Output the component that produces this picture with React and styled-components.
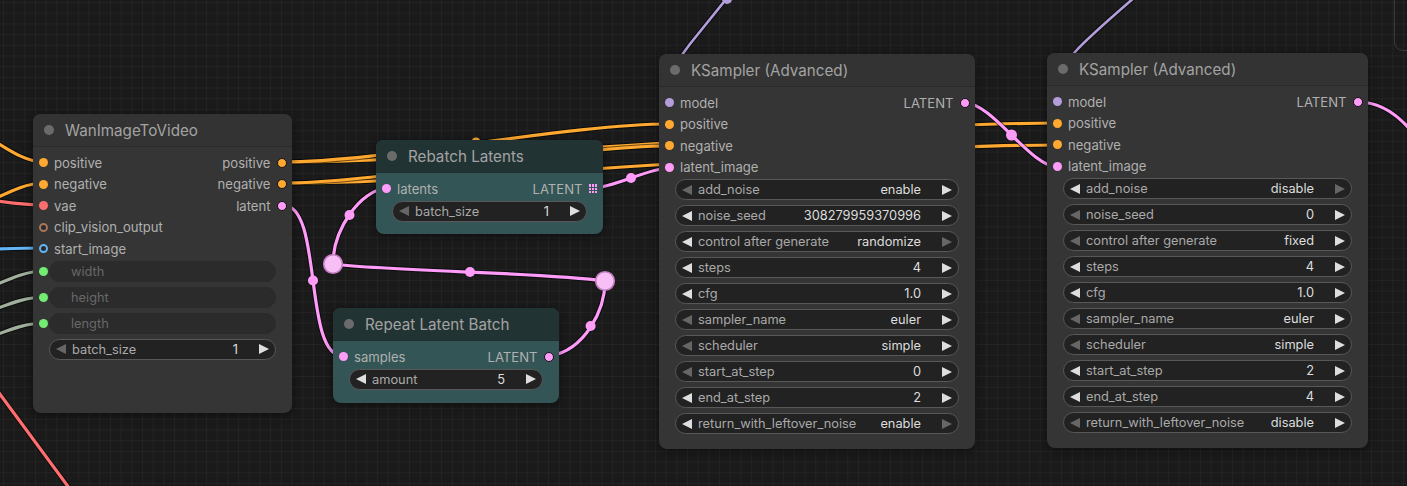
import React from 'react';
import styled, { createGlobalStyle } from 'styled-components';

const C = {
  orange: '#ffa931',
  pink: '#ff9cf9',
  lav: '#b39ddb',
  red: '#ff6e6e',
  blue: '#64b5f6',
  intWire: '#a0b09d',
  intDot: '#72ec72',
  clip: '#a8765a',
};

const GlobalStyle = createGlobalStyle`
  html, body { margin: 0; padding: 0; background: #1a1a1a; overflow: hidden; }
  body { font-family: Inter, "Noto Sans", sans-serif; }
`;

const Canvas = styled.div`
  position: relative;
  width: 1407px;
  height: 486px;
  overflow: hidden;
  background-color: #1a1a1a;
  background-image:
    linear-gradient(to right, rgba(255,255,255,0.035) 1px, transparent 1px),
    linear-gradient(to bottom, rgba(255,255,255,0.035) 1px, transparent 1px);
  background-size: 10.7px 10.7px;
  background-position: 3px 2px;
  font-family: Inter, "Noto Sans", sans-serif;
`;

const WireLayer = styled.svg`
  position: absolute;
  left: 0;
  top: 0;
  width: 1407px;
  height: 486px;
  overflow: visible;
`;

const CornerPanel = styled.div`
  position: absolute;
  left: 1394px;
  top: -12px;
  width: 40px;
  height: 63px;
  box-sizing: border-box;
  border: 1px solid #3a3a3a;
  border-radius: 9px;
`;

const NodeBox = styled.div`
  position: absolute;
  left: ${p => p.$x}px;
  top: ${p => p.$y}px;
  width: ${p => p.$w}px;
  ${p => (p.$h ? `height: ${p.$h}px;` : '')}
  background: ${p => (p.$teal ? '#335555' : '#353535')};
  border-radius: 8px;
  box-shadow: 0 2px 8px rgba(0, 0, 0, 0.45);
  overflow: hidden;
  display: flex;
  flex-direction: column;
`;

const Header = styled.div`
  height: 33px;
  flex: none;
  box-sizing: border-box;
  display: flex;
  align-items: center;
  gap: 11px;
  padding-left: 11px;
  background: ${p => (p.$teal ? '#223333' : '#333333')};
  border-bottom: 1px solid ${p => (p.$teal ? '#1e2e2e' : '#2a2a2a')};
`;

const TitleDot = styled.span`
  width: 10px;
  height: 10px;
  border-radius: 50%;
  background: #6b6b6b;
  flex: none;
`;

const Title = styled.span`
  font-size: 15.2px;
  color: #a3a3a3;
  white-space: nowrap;
`;

const Body = styled.div`
  display: flex;
  flex-direction: column;
  padding: 5px 0 ${p => p.$pb}px;
`;

const SlotRow = styled.div`
  height: 21.5px;
  display: flex;
  align-items: center;
  justify-content: space-between;
  padding: 0 5.5px;
`;

const SlotSide = styled.div`
  display: flex;
  align-items: center;
  gap: ${p => (p.$out ? 6 : 6.5)}px;
`;

const SlotLabel = styled.span`
  font-size: 13.1px;
  color: #b0b0b0;
  white-space: nowrap;
`;

const Dot = styled.span`
  width: ${p => (p.$out ? 10 : 9)}px;
  height: ${p => (p.$out ? 10 : 9)}px;
  border-radius: 50%;
  box-sizing: border-box;
  flex: none;
  background: ${p => (p.$hollow ? '#2b2b2b' : p.$c)};
  border: ${p => (p.$hollow ? `2px solid ${p.$c}` : p.$out ? '1px solid #141414' : 'none')};
`;

const GridIcon = styled.span`
  width: 9px;
  height: 9px;
  flex: none;
  display: grid;
  grid-template-columns: repeat(3, 2.4px);
  grid-template-rows: repeat(3, 2.4px);
  gap: 0.9px;
`;

const GridCell = styled.span`
  background: ${C.pink};
`;

const WidgetList = styled.div`
  display: flex;
  flex-direction: column;
  margin-top: -1.5px;
`;

const WidgetRow = styled.div`
  height: 26px;
  display: flex;
  align-items: center;
  gap: 1.5px;
  padding: 0 16px 0 ${p => (p.$dot ? 5.5 : 16)}px;
`;

const Pill = styled.div`
  flex: 1;
  height: 21px;
  box-sizing: border-box;
  border-radius: 11px;
  display: flex;
  align-items: center;
  padding: 0 6px 0 ${p => (p.$disabled ? 15 : 6)}px;
  background: ${p => (p.$disabled ? '#2b2b2b' : '#222222')};
  border: 1px solid ${p => (p.$disabled ? '#2b2b2b' : '#585858')};
`;

const Arrow = styled.span`
  width: 0;
  height: 0;
  flex: none;
  border-top: 5.5px solid transparent;
  border-bottom: 5.5px solid transparent;
  ${p =>
    p.$dir === 'l'
      ? `border-right: 10px solid ${p.$dim ? '#666666' : '#dedede'};`
      : `border-left: 10px solid ${p.$dim ? '#666666' : '#dedede'};`}
`;

const WLabel = styled.span`
  flex: 1;
  margin-left: 6px;
  font-size: 12.8px;
  color: ${p => (p.$disabled ? '#686868' : '#a9a9a9')};
  white-space: nowrap;
`;

const WValue = styled.span`
  margin-right: 21px;
  font-size: 12.8px;
  color: #dddddd;
  white-space: nowrap;
`;

function Slot({ s, out }) {
  if (!s) return <SlotSide />;
  const dot = s.grid ? (
    <GridIcon>
      {Array.from({ length: 9 }).map((_, i) => (
        <GridCell key={i} />
      ))}
    </GridIcon>
  ) : (
    <Dot $c={s.c} $hollow={s.hollow} $out={out} />
  );
  return out ? (
    <SlotSide $out>
      <SlotLabel>{s.l}</SlotLabel>
      {dot}
    </SlotSide>
  ) : (
    <SlotSide>
      {dot}
      <SlotLabel>{s.l}</SlotLabel>
    </SlotSide>
  );
}

function Widget({ w }) {
  if (w.dis) {
    return (
      <WidgetRow $dot>
        <Dot $c={C.intDot} />
        <Pill $disabled>
          <WLabel $disabled>{w.l}</WLabel>
        </Pill>
      </WidgetRow>
    );
  }
  return (
    <WidgetRow>
      <Pill>
        <Arrow $dir="l" $dim={w.ld} />
        <WLabel>{w.l}</WLabel>
        <WValue>{w.v}</WValue>
        <Arrow $dir="r" $dim={w.rd} />
      </Pill>
    </WidgetRow>
  );
}

function Node({ n }) {
  return (
    <NodeBox $x={n.x} $y={n.y} $w={n.w} $h={n.h} $teal={n.teal}>
      <Header $teal={n.teal}>
        <TitleDot />
        <Title>{n.title}</Title>
      </Header>
      <Body $pb={n.pb}>
        {n.slots.map((row, i) => (
          <SlotRow key={i}>
            <Slot s={row[0]} />
            <Slot s={row[1]} out />
          </SlotRow>
        ))}
        <WidgetList>
          {n.widgets.map((w, i) => (
            <Widget key={i} w={w} />
          ))}
        </WidgetList>
      </Body>
    </NodeBox>
  );
}

const ksSlots = [
  [{ l: 'model', c: C.lav }, { l: 'LATENT', c: C.pink }],
  [{ l: 'positive', c: C.orange }, null],
  [{ l: 'negative', c: C.orange }, null],
  [{ l: 'latent_image', c: C.pink }, null],
];

const nodes = [
  {
    title: 'WanImageToVideo',
    x: 33, y: 114, w: 259, h: 299, pb: 12,
    slots: [
      [{ l: 'positive', c: C.orange }, { l: 'positive', c: C.orange }],
      [{ l: 'negative', c: C.orange }, { l: 'negative', c: C.orange }],
      [{ l: 'vae', c: C.red }, { l: 'latent', c: C.pink }],
      [{ l: 'clip_vision_output', c: C.clip, hollow: true }, null],
      [{ l: 'start_image', c: C.blue, hollow: true }, null],
    ],
    widgets: [
      { l: 'width', dis: true },
      { l: 'height', dis: true },
      { l: 'length', dis: true },
      { l: 'batch_size', v: '1', ld: true },
    ],
  },
  {
    title: 'Rebatch Latents',
    teal: true,
    x: 376, y: 140, w: 227, pb: 10,
    slots: [[{ l: 'latents', c: C.pink }, { l: 'LATENT', grid: true }]],
    widgets: [{ l: 'batch_size', v: '1', ld: true }],
  },
  {
    title: 'Repeat Latent Batch',
    teal: true,
    x: 333, y: 308, w: 226, pb: 11,
    slots: [[{ l: 'samples', c: C.pink }, { l: 'LATENT', c: C.pink }]],
    widgets: [{ l: 'amount', v: '5' }],
  },
  {
    title: 'KSampler (Advanced)',
    x: 659, y: 54, w: 316, pb: 12,
    slots: ksSlots,
    widgets: [
      { l: 'add_noise', v: 'enable', ld: true },
      { l: 'noise_seed', v: '308279959370996' },
      { l: 'control after generate', v: 'randomize', rd: true },
      { l: 'steps', v: '4' },
      { l: 'cfg', v: '1.0' },
      { l: 'sampler_name', v: 'euler', ld: true },
      { l: 'scheduler', v: 'simple', ld: true },
      { l: 'start_at_step', v: '0', ld: true },
      { l: 'end_at_step', v: '2' },
      { l: 'return_with_leftover_noise', v: 'enable', rd: true },
    ],
  },
  {
    title: 'KSampler (Advanced)',
    x: 1047, y: 53, w: 321, pb: 12,
    slots: ksSlots,
    widgets: [
      { l: 'add_noise', v: 'disable', rd: true },
      { l: 'noise_seed', v: '0', ld: true },
      { l: 'control after generate', v: 'fixed', ld: true },
      { l: 'steps', v: '4' },
      { l: 'cfg', v: '1.0' },
      { l: 'sampler_name', v: 'euler', ld: true },
      { l: 'scheduler', v: 'simple', ld: true },
      { l: 'start_at_step', v: '2' },
      { l: 'end_at_step', v: '4' },
      { l: 'return_with_leftover_noise', v: 'disable', ld: true },
    ],
  },
];

const wires = [
  // left edge inputs
  { d: 'M-60,120 C-20,120 10,162 44,162', c: C.orange },
  { d: 'M-60,215 C-20,215 10,183 44,183', c: C.orange },
  { d: 'M-60,196 C-20,196 10,205 44,205', c: C.red },
  { d: 'M-60,250 C-20,250 10,248 44,248', c: C.blue },
  { d: 'M-60,300 C-20,300 10,271 44,271', c: C.intWire },
  { d: 'M-60,322 C-20,322 10,297 44,297', c: C.intWire },
  { d: 'M-60,348 C-20,348 10,323 44,323', c: C.intWire },
  { d: 'M-12,378 L78,500', c: C.red },
  // conditioning
  { d: 'M283,162 C477,162 864,123 1058,123', c: C.orange },
  { d: 'M283,183 C477,183 864,145 1058,145', c: C.orange },
  { d: 'M283,162 C380,162 572,124 669,124', c: C.orange },
  { d: 'M283,183 C380,183 572,146 669,146', c: C.orange },
  // model
  { d: 'M748,-28 L690,44 C672,68 652,98 669,103', c: C.lav, w: 2.6 },
  { d: 'M1157,-22 C1120,10 1090,35 1075,52 C1062,68 1040,98 1058,102', c: C.lav, w: 2.6 },
  // latents
  { d: 'M283,205 C323.6,205 302.4,356 343,356', c: C.pink },
  { d: 'M550,356 C585,350 605,310 605,281', c: C.pink },
  { d: 'M605,281 C540,272 400,272 333,264', c: C.pink },
  { d: 'M333,264 C333,230 360,190 387,188', c: C.pink },
  { d: 'M593,188 C612.6,188 649.4,168 669,168', c: C.pink },
  { d: 'M965,103 C993,103 1030,167 1058,167', c: C.pink },
  { d: 'M1358,102 C1390,102 1420,130 1445,190', c: C.pink },
];

const markers = [
  { x: 476, y: 142, r: 4.5, c: C.orange },
  { x: 727, y: -1, r: 5, c: C.lav },
  { x: 313, y: 280.5, r: 5, c: C.pink },
  { x: 590.6, y: 326, r: 5, c: C.pink },
  { x: 470, y: 272, r: 5, c: C.pink },
  { x: 349.5, y: 215, r: 5, c: C.pink },
  { x: 631, y: 178, r: 5, c: C.pink },
  { x: 1011.5, y: 135, r: 5.5, c: C.pink },
];

const reroutes = [
  { x: 333, y: 264 },
  { x: 605, y: 281 },
];

export default function App() {
  return (
    <>
      <GlobalStyle />
      <Canvas>
        <WireLayer viewBox="0 0 1407 486">
          {wires.map((w, i) => (
            <g key={i}>
              <path d={w.d} fill="none" stroke="rgba(0,0,0,0.55)" strokeWidth={(w.w || 3.2) + 2} />
              <path d={w.d} fill="none" stroke={w.c} strokeWidth={w.w || 3.2} strokeLinecap="round" />
            </g>
          ))}
          {markers.map((m, i) => (
            <circle key={i} cx={m.x} cy={m.y} r={m.r} fill={m.c} />
          ))}
          {reroutes.map((r, i) => (
            <circle key={i} cx={r.x} cy={r.y} r={9.3} fill="#f8bff6" stroke="#c47ec2" strokeWidth={1.6} />
          ))}
        </WireLayer>
        {nodes.map((n, i) => (
          <Node key={i} n={n} />
        ))}
        <CornerPanel />
      </Canvas>
    </>
  );
}
